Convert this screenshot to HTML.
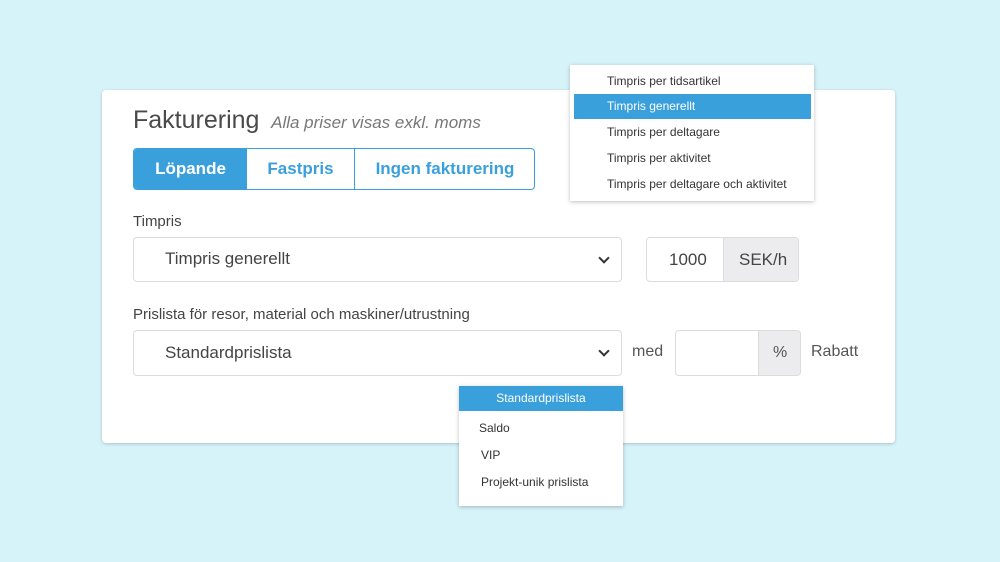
<!DOCTYPE html>
<html><head><style>
body{margin:0;width:1000px;height:562px;background:#d6f3f9;position:relative;overflow:hidden;font-family:"Liberation Sans",sans-serif;color:#444}
.a{position:absolute}
.card{left:102px;top:90px;width:793px;height:353px;background:#fff;border-radius:4px;box-shadow:0 1px 3px rgba(0,0,0,.2)}
.box{border:1px solid #dcdcdc;border-radius:4px;background:#fff;box-sizing:border-box}
.chev{width:6px;height:6px;border-right:2px solid #333;border-bottom:2px solid #333;transform:rotate(45deg)}
.menu{background:#fff;box-shadow:0 1px 4px rgba(0,0,0,.25);font-size:12px;color:#333}
.menu div{position:absolute;left:0;right:0}
</style></head><body>
<div class="a card"></div>
<div class="a" style="left:133px;top:106px;font-size:25px;color:#4a4a4a">Fakturering <span style="font-size:17px;font-style:italic;color:#777">&nbsp;Alla priser visas exkl. moms</span></div>
<div class="a" style="left:133px;top:148px;width:402px;height:42px;border:1px solid #3aa0dc;border-radius:4px;box-sizing:border-box;overflow:hidden;font-size:17px;font-weight:bold;color:#3aa0dc">
 <div class="a" style="left:0;top:0;width:113px;height:40px;background:#3aa0dc;color:#fff;text-align:center;line-height:40px">Löpande</div>
 <div class="a" style="left:113px;top:0;width:107px;height:40px;border-right:1px solid #3aa0dc;text-align:center;line-height:40px">Fastpris</div>
 <div class="a" style="left:221px;top:0;width:180px;height:40px;text-align:center;line-height:40px">Ingen fakturering</div>
</div>
<div class="a" style="left:133px;top:213px;font-size:15px">Timpris</div>
<div class="a box" style="left:133px;top:237px;width:489px;height:45px"></div>
<div class="a" style="left:165px;top:249px;font-size:17px;color:#444">Timpris generellt</div>
<div class="a chev" style="left:600px;top:254px"></div>
<div class="a box" style="left:646px;top:237px;width:153px;height:45px;overflow:hidden">
 <div class="a" style="left:76px;top:0;width:77px;height:45px;background:#ececee;border-left:1px solid #dcdcdc"></div>
 <div class="a" style="left:22px;top:12px;font-size:17px">1000</div>
 <div class="a" style="left:92px;top:12px;font-size:17px">SEK/h</div>
</div>
<div class="a" style="left:133px;top:306px;font-size:15px">Prislista för resor, material och maskiner/utrustning</div>
<div class="a box" style="left:133px;top:330px;width:489px;height:46px"></div>
<div class="a" style="left:165px;top:343px;font-size:17px">Standardprislista</div>
<div class="a chev" style="left:600px;top:347px"></div>
<div class="a" style="left:632px;top:343px;font-size:16px;color:#555">med</div>
<div class="a box" style="left:675px;top:330px;width:126px;height:46px;overflow:hidden">
 <div class="a" style="left:82px;top:0;width:44px;height:46px;background:#ececee;border-left:1px solid #dcdcdc"></div>
 <div class="a" style="left:97px;top:13px;font-size:16px;color:#555">%</div>
</div>
<div class="a" style="left:811px;top:343px;font-size:16px;color:#555">Rabatt</div>
<div class="a menu" style="left:570px;top:65px;width:244px;height:136px">
 <div style="top:9px;padding-left:37px">Timpris per tidsartikel</div>
 <div style="top:29px;left:4px;right:3px;height:25px;background:#3aa0dc;color:#fff;line-height:25px;padding-left:33px">Timpris generellt</div>
 <div style="top:60px;padding-left:37px">Timpris per deltagare</div>
 <div style="top:86px;padding-left:37px">Timpris per aktivitet</div>
 <div style="top:112px;padding-left:37px">Timpris per deltagare och aktivitet</div>
</div>
<div class="a menu" style="left:459px;top:386px;width:164px;height:120px">
 <div style="top:0;height:25px;background:#3aa0dc;color:#fff;text-align:center;line-height:25px">Standardprislista</div>
 <div style="top:35px;padding-left:20px">Saldo</div>
 <div style="top:62px;padding-left:22px">VIP</div>
 <div style="top:89px;padding-left:22px">Projekt-unik prislista</div>
</div>
</body></html>
